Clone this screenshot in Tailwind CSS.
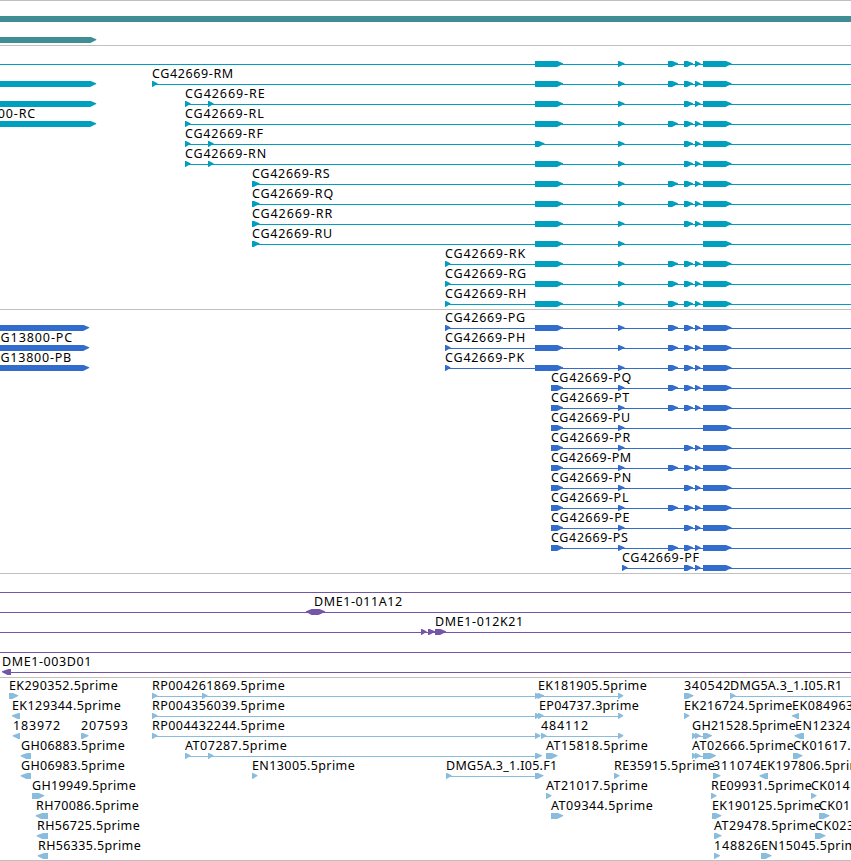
<!DOCTYPE html>
<html lang="en">
<head>
<meta charset="utf-8">
<title>Genome browser</title>
<script src="https://cdn.jsdelivr.net/npm/@tailwindcss/browser@4"></script>
</head>
<body class="bg-white">
<main class="flex h-[861px] w-[851px] flex-col overflow-hidden bg-white">
  <section class="flex h-[45px] shrink-0 flex-col border-t border-[#c0c0c0] pt-[15px] text-[#3e8e93]">
    <div class="h-1.5 w-full bg-current"></div>
    <svg class="mt-[15px] block h-1.5 w-full" viewBox="0 0 851 6"><path d="M0 0H91L96.3 2.2V3L90.5 6H0Z" fill="currentColor"/></svg>
  </section>
  <section id="transcripts" class="flex shrink-0 flex-col border-t border-[#c0c0c0] pt-0.5 pb-px text-[#009ebf]"></section>
  <section id="proteins" class="flex shrink-0 flex-col border-t border-[#c0c0c0] pt-0.5 pb-px text-[#326ccc]"></section>
  <section id="bacs" class="flex shrink-0 flex-col border-t border-[#c0c0c0] pt-0.5 pb-px text-[#7555a8]"></section>
  <section id="ests" class="flex shrink-0 flex-col border-t border-[#c0c0c0] pt-0.5 text-[#8abcde]"></section>
  <div class="h-px shrink-0 bg-[#c0c0c0]"></div>
</main>
<script>
// Exons shared between the gene models: [start, end, strand]
const X = {A:[535,563], a:[535,544.5], B:[618,624.5], C:[668,678], D:[684,693], E:[695,700.5], F:[703,731.5]};
const ex = s => [...s].map(k => X[k]);
// Each item: {t: label, x: label start, e: label end, l: [line start, line end], f: features}
const model = (t, x, e, starts, s) => ({t, x, e, l:[starts.length ? starts[0][0] : 0, 851], f:[...starts, ...ex(s)]});
const bar = (end, t, x, e) => ({t, x, e, f:[[-20, end]]});
const s185 = [[185,190.5]], s208 = [[185,190.5],[208,213.5]], s252 = [[252,259.5]], s445 = [[445,450.5]], s551 = [[551,563]];

const tracks = {
  transcripts: [
    [model('',0,0,[],'ABCDEF')],
    [bar(96.2), model('CG42669-RM',152,233,[[152,157.5]],'ABCDEF')],
    [bar(96.2), model('CG42669-RE',185,264.5,s208,'ABDEF')],
    [bar(96.2,'CG13800-RC',-45,35), model('CG42669-RL',185,263.5,s185,'ABCDEF')],
    [model('CG42669-RF',185,262.7,s208,'aBDEF')],
    [model('CG42669-RN',185,266,s208,'ABDEF')],
    [model('CG42669-RS',252,329.5,s252,'ABCDEF')],
    [model('CG42669-RQ',252,333,s252,'ABCDEF')],
    [model('CG42669-RR',252,332,s252,'ABDEF')],
    [model('CG42669-RU',252,332,s252,'ABF')],
    [model('CG42669-RK',445,525,s445,'ABCDEF')],
    [model('CG42669-RG',445,526,s445,'ABCDEF')],
    [model('CG42669-RH',445,526,s445,'ABCDEF')]
  ],
  proteins: [
    [bar(89.2), model('CG42669-PG',445,525,s445,'ABCDEF')],
    [bar(89.2,'CG13800-PC',-8,72), model('CG42669-PH',445,525,s445,'ABCDEF')],
    [bar(89.2,'CG13800-PB',-8,71), model('CG42669-PK',445,524,s445,'ABCDEF')],
    [model('CG42669-PQ',551,631,s551,'BCDEF')],
    [model('CG42669-PT',551,629,s551,'BCDEF')],
    [model('CG42669-PU',551,630,s551,'BF')],
    [model('CG42669-PR',551,630,s551,'BDEF')],
    [model('CG42669-PM',551,631,s551,'BCDEF')],
    [model('CG42669-PN',551,631,s551,'BDEF')],
    [model('CG42669-PL',551,628.3,s551,'BCDEF')],
    [model('CG42669-PE',551,629.3,s551,'BDEF')],
    [model('CG42669-PS',551,627.7,s551,'BCDEF')],
    [model('CG42669-PF',622,698.7,[[622,627.5]],'DEF')]
  ],
  bacs: [
    [{l:[0,851], f:[]}],
    [{t:'DME1-011A12', x:314, e:402, l:[0,851], f:[[306,325,'both']]}],
    [{t:'DME1-012K21', x:435, e:523, l:[0,851], f:[[421,426.5],[428,435],[435,446]]}],
    [{l:[0,851], f:[]}],
    [{t:'DME1-003D01', x:2, e:91.3, l:[8,851], f:[[2,11,'rev']]}]
  ],
  ests: [
    [{t:'EK290352.5prime',x:9,e:117.5,f:[[9,18.3]]}, {t:'RP004261869.5prime',x:152,e:284.5,l:[152,622],f:[[152,157.5],[202,207.5],[535,540],[537.5,544],[618,623.3]]},
     {t:'EK181905.5prime',x:538,e:646.5,f:[]}, {t:'340542',x:684,e:730.3,f:[[684,693.5]]}, {t:'DMG5A.3_1.I05.R1',x:730,e:842,l:[730,851],f:[[730,735.5]]}],
    [{t:'EK129344.5prime',x:12,e:120.5,f:[[12,20,'rev']]}, {t:'RP004356039.5prime',x:152,e:284.5,l:[152,622],f:[[152,157.5],[535,540],[538,543.5],[618,623.3]]},
     {t:'EP04737.3prime',x:539,e:638.5,f:[]}, {t:'EK216724.5prime',x:684,e:792,f:[[684,689.5]]}, {t:'EK084963',x:792,e:853,f:[[792,799,'rev']]}],
    [{t:'183972',x:13,e:60,f:[[12.7,20,'rev']]}, {t:'207593',x:81,e:127.7,f:[[81,88.5]]}, {t:'RP004432244.5prime',x:152,e:284.5,l:[152,540],f:[[152,157.5],[535,540.5]]},
     {t:'484112',x:541,e:588,l:[541,622],f:[[541,546.5],[618,623.3]]}, {t:'GH21528.5prime',x:692,e:795.5,l:[692,710],f:[[692,697],[695,700.5],[703,712]]}, {t:'EN12324',x:795,e:850,f:[[794.5,804,'rev']]}],
    [{t:'GH06883.5prime',x:21,e:124.5,f:[[20.7,31,'rev']]}, {t:'AT07287.5prime',x:185,e:286.5,l:[185,540],f:[[185,190.5],[208,213.5],[535,542]]},
     {t:'AT15818.5prime',x:546,e:647.5,f:[[546,557.5]]}, {t:'AT02666.5prime',x:692,e:793.5,l:[692,710],f:[[692,697],[695,700.5],[703,716]]}, {t:'CK01617.',x:793,e:850.3,f:[[793,802.5]]}],
    [{t:'GH06983.5prime',x:21,e:124.5,f:[[20.7,31,'rev']]}, {t:'EN13005.5prime',x:252,e:354.5,f:[[252,257.5]]}, {t:'DMG5A.3_1.I05.F1',x:446,e:557,l:[446,540],f:[[446,451.5],[535,543.5]]},
     {t:'RE35915.5prime',x:614,e:714.7,f:[[614,619.5]]}, {t:'311074',x:713,e:760,f:[[713,720.5]]}, {t:'EK197806.5prime',x:760,e:868.5,f:[[759.5,768,'rev']]}],
    [{t:'GH19949.5prime',x:32,e:135.5,f:[[32,44.3]]}, {t:'AT21017.5prime',x:546,e:647.5,f:[[546,551.5]]}, {t:'RE09931.5prime',x:711,e:811.5,f:[[711,716.5]]}, {t:'CK014',x:811,e:849.5,f:[[811,816.5]]}],
    [{t:'RH70086.5prime',x:36,e:138.5,f:[[35.7,48,'rev']]}, {t:'AT09344.5prime',x:551,e:652.5,f:[[551,563.3]]}, {t:'EK190125.5prime',x:712,e:820.5,f:[[712,721.5]]}, {t:'CK01',x:819,e:850,f:[[819,829.5]]}],
    [{t:'RH56725.5prime',x:37,e:139.5,f:[[36.7,48,'rev']]}, {t:'AT29478.5prime',x:714,e:815.5,f:[[714,721.5]]}, {t:'CK023',x:815,e:854,f:[[815,825.5]]}],
    [{t:'RH56335.5prime',x:38,e:140.5,f:[[37.7,48,'rev']]}, {t:'148826',x:714,e:760.7,f:[[714,720]]}, {t:'EN15045.5prime',x:761,e:863.5,f:[[761,771.5]]}]
  ]
};

function shape([a, b, kind]) {
  const h = 5.5, y = 13, tip = 15.2, end = 19;
  if (kind === 'rev') return `M${b} ${y}H${a+h+1}L${a} ${tip}V${tip+1}L${a+h} ${end}H${b}Z`;
  if (kind === 'both') return `M${a+h} ${y}H${b-h}L${b} ${tip}V${tip+.8}L${b-h-1} ${end}H${a+h}L${a} ${tip+.8}V${tip}Z`;
  const s = Math.max(a + 1, b - h);
  return `M${a} ${y}H${s}L${b} ${tip}V${tip+.8}L${Math.max(a+.5, s-.5)} ${end}H${a}Z`;
}
for (const id in tracks) {
  document.getElementById(id).innerHTML = tracks[id].map(row => {
    let o = '';
    for (const r of row) {
      if (r.l) o += `<rect x="${r.l[0]}" y="16" width="${r.l[1]-r.l[0]}" height="1"/>`;
      for (const f of r.f) o += `<path d="${shape(f)}"/>`;
    }
    for (const r of row) if (r.t) o += `<text class="fill-black font-['Noto_Sans',sans-serif] text-[12.5px]" x="${r.x}" y="10" textLength="${r.e-r.x+.2}">${r.t}</text>`;
    return `<svg class="block h-5 w-full shrink-0 overflow-visible fill-current" viewBox="0 0 851 20">${o}</svg>`;
  }).join('');
}
</script>
</body>
</html>
